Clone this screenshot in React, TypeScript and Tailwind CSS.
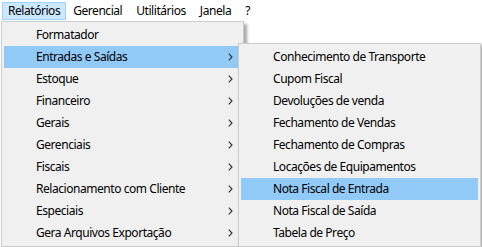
const barItems = ["Relatórios", "Gerencial", "Utilitários", "Janela", "?"];

const mainItems = [
  { label: "Formatador", sub: false },
  { label: "Entradas e Saídas", sub: true, active: true },
  { label: "Estoque", sub: true },
  { label: "Financeiro", sub: true },
  { label: "Gerais", sub: true },
  { label: "Gerenciais", sub: true },
  { label: "Fiscais", sub: true },
  { label: "Relacionamento com Cliente", sub: true },
  { label: "Especiais", sub: true },
  { label: "Gera Arquivos Exportação", sub: true },
];

const subItems = [
  "Conhecimento de Transporte",
  "Cupom Fiscal",
  "Devoluções de venda",
  "Fechamento de Vendas",
  "Fechamento de Compras",
  "Locações de Equipamentos",
  "Nota Fiscal de Entrada",
  "Nota Fiscal de Saída",
  "Tabela de Preço",
];

function Chevron() {
  return (
    <svg width="5" height="8" viewBox="0 0 5 8" className="shrink-0">
      <path d="M0.8 0.6 L4 4 L0.8 7.4" fill="none" stroke="#333" strokeWidth="1.2" />
    </svg>
  );
}

export default function App() {
  return (
    <div className="relative h-[247px] w-[482px] overflow-hidden bg-white font-['Noto_Sans',sans-serif] text-[12px] tracking-[-0.45px] text-black">
      {/* menu bar */}
      <div className="flex h-[21px] items-start pl-[2px] pt-[2px]">
        {barItems.map((item, i) => (
          <div
            key={item}
            className={
              i === 0
                ? "flex h-[18px] items-center border border-[#99d1ff] bg-[#cce8ff] px-[5px]"
                : "flex h-[18px] items-center border border-transparent px-[6px]"
            }
          >
            {item}
          </div>
        ))}
      </div>

      {/* Relatórios dropdown */}
      <div className="absolute left-[1px] top-[21px] w-[243px] border border-[#cccccc] bg-[#f0f0f0] p-[2px] shadow-[3px_3px_3px_rgba(0,0,0,0.35)]">
        {mainItems.map((it) => (
          <div
            key={it.label}
            className={`flex h-[22px] items-center justify-between pl-[32px] pr-[8px] ${
              it.active ? "bg-[#91c9f7]" : ""
            }`}
          >
            <span>{it.label}</span>
            {it.sub && <Chevron />}
          </div>
        ))}
      </div>

      {/* Entradas e Saídas submenu */}
      <div className="absolute left-[238px] top-[43px] w-[243px] border border-[#cccccc] bg-[#f0f0f0] p-[2px] shadow-[2px_2px_3px_rgba(0,0,0,0.35)]">
        {subItems.map((label) => (
          <div
            key={label}
            className={`flex h-[22px] items-center pl-[32px] ${
              label === "Nota Fiscal de Entrada" ? "bg-[#91c9f7]" : ""
            }`}
          >
            {label}
          </div>
        ))}
      </div>
    </div>
  );
}
